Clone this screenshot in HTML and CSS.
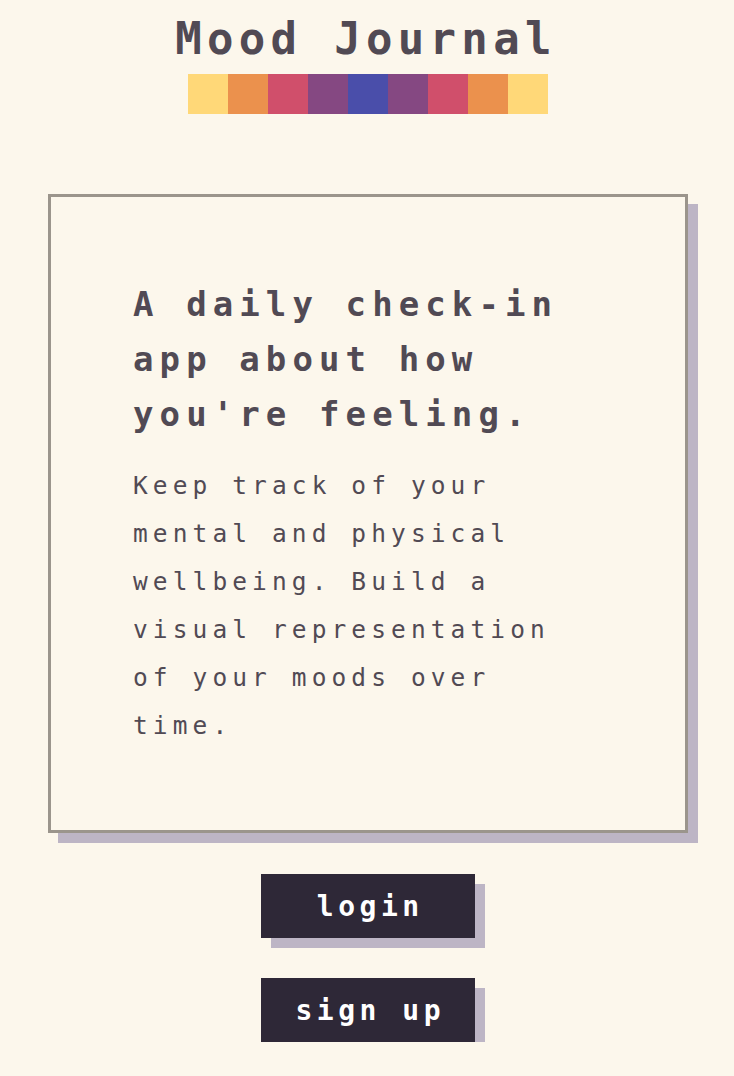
FILE: index.html
```html
<!DOCTYPE html>
<html lang="en">
<head>
<meta charset="utf-8">
<title>Mood Journal</title>
<link rel="stylesheet" href="styles.css">
</head>
<body>
<main class="page">
  <header class="masthead">
    <h1 class="title">Mood Journal</h1>
    <div class="palette">
      <span class="swatch yellow"></span>
      <span class="swatch orange"></span>
      <span class="swatch pink"></span>
      <span class="swatch purple"></span>
      <span class="swatch blue"></span>
      <span class="swatch purple"></span>
      <span class="swatch pink"></span>
      <span class="swatch orange"></span>
      <span class="swatch yellow"></span>
    </div>
  </header>
  <section class="card">
    <div class="card-text">
      <h2 class="headline">A daily check-in app about how you're feeling.</h2>
      <p class="blurb">Keep track of your mental and physical wellbeing. Build a visual representation of your moods over time.</p>
    </div>
  </section>
  <nav class="actions">
    <a class="btn" href="#">login</a>
    <a class="btn" href="#">sign up</a>
  </nav>
</main>
</body>
</html>
```
FILE: styles.css
```css
html, body {
  margin: 0;
  padding: 0;
  background: #fcf7ec;
}
body {
  font-family: "DejaVu Sans Mono", "Liberation Mono", monospace;
  color: #514a54;
}
.page {
  display: flex;
  flex-direction: column;
  align-items: center;
  padding-left: 2px;
}
.masthead {
  display: flex;
  flex-direction: column;
  align-items: center;
  padding-top: 10px;
}
.title {
  margin: 0 0 0 -4px;
  font-size: 44px;
  line-height: 58px;
  font-weight: 600;
  letter-spacing: 5.3px;
  color: #514a54;
}
.palette {
  display: flex;
  margin-top: 6px;
}
.swatch {
  width: 40px;
  height: 40px;
  display: block;
}
.yellow { background: #ffd878; }
.orange { background: #eb914d; }
.pink { background: #d04f6b; }
.purple { background: #854882; }
.blue { background: #4a4eaa; }

.card {
  margin-top: 80px;
  width: 640px;
  box-sizing: border-box;
  border: 3px solid #9b958c;
  box-shadow: 10px 10px 0 #bdb5c5;
  padding: 80px 82px 80px;
}
.card-text {
  width: 460px;
}
.headline {
  margin: 0;
  font-size: 34px;
  line-height: 55px;
  font-weight: 600;
  letter-spacing: 6.1px;
}
.blurb {
  margin: 20px 0 0;
  font-size: 24.5px;
  line-height: 48px;
  letter-spacing: 5.1px;
}
.actions {
  margin-top: 41px;
  display: flex;
  flex-direction: column;
  align-items: center;
  gap: 40px;
}
.btn {
  width: 214px;
  height: 64px;
  display: flex;
  align-items: center;
  justify-content: center;
  background: #2e2837;
  box-shadow: 10px 10px 0 #bdb5c5;
  color: #ffffff;
  text-decoration: none;
  font-size: 28px;
  font-weight: 600;
  letter-spacing: 4.5px;
  padding-left: 4.5px;
  box-sizing: border-box;
}
```
